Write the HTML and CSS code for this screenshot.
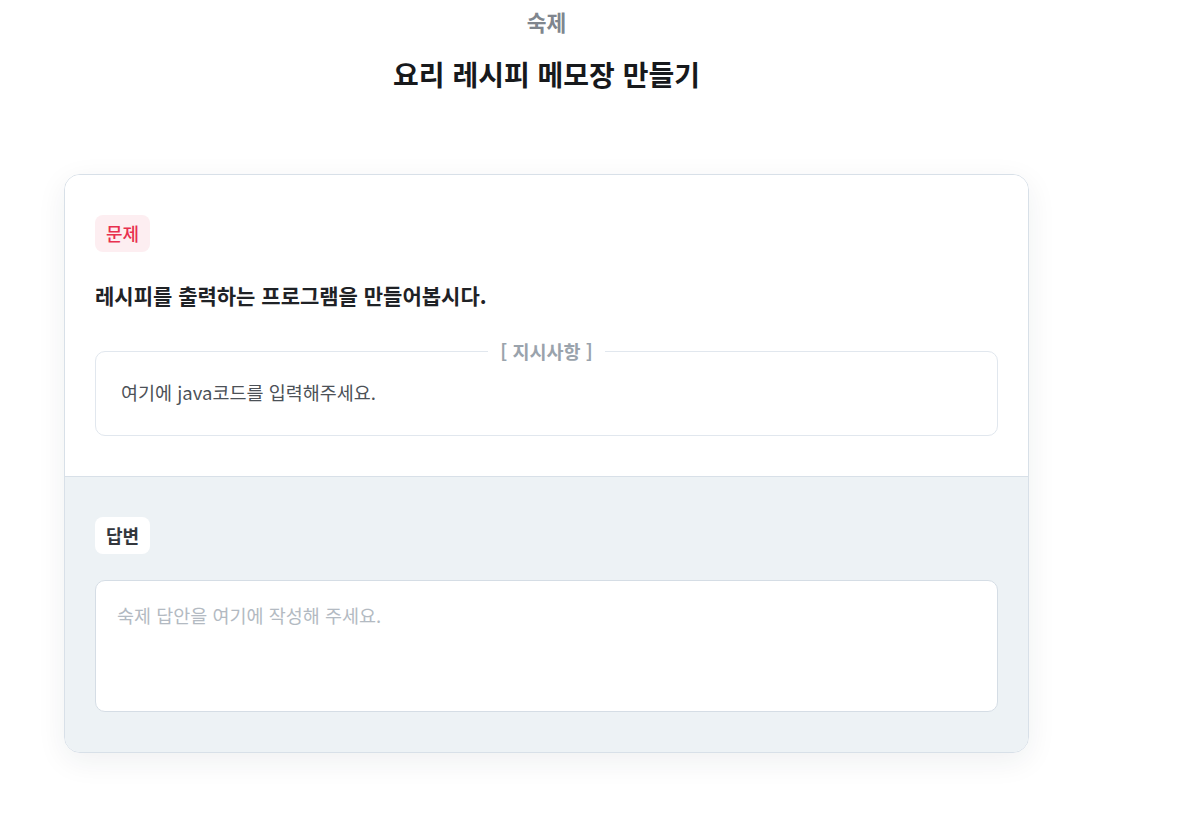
FILE: index.html
```html
<!DOCTYPE html>
<html lang="ko">
<head>
<meta charset="utf-8">
<title>요리 레시피 메모장 만들기</title>
<link rel="stylesheet" href="styles.css">
</head>
<body>
<div class="page">
  <header class="head">
    <div class="kicker">숙제</div>
    <h1 class="title">요리 레시피 메모장 만들기</h1>
  </header>
  <section class="card">
    <div class="problem">
      <span class="badge badge-red">문제</span>
      <p class="question">레시피를 출력하는 프로그램을 만들어봅시다.</p>
      <fieldset class="guide">
        <legend class="guide-title">[ 지시사항 ]</legend>
        <p class="guide-text">여기에 java코드를 입력해주세요.</p>
      </fieldset>
    </div>
    <div class="answer">
      <span class="badge badge-white">답변</span>
      <textarea class="answer-box" placeholder="숙제 답안을 여기에 작성해 주세요."></textarea>
    </div>
  </section>
</div>
</body>
</html>
```
FILE: styles.css
```css
* { box-sizing: border-box; }
html, body { margin: 0; padding: 0; background: #fff; }
body {
  font-family: "Noto Sans CJK KR", "Noto Sans", sans-serif;
  color: #1b1d21;
}
.page {
  width: 965px;
  margin-left: 64px;
  padding-bottom: 60px;
}
.head {
  text-align: center;
  padding-top: 7px;
}
.kicker {
  font-size: 21.5px;
  font-weight: 700;
  color: #80868e;
  line-height: 30px;
}
.title {
  margin: 19px 0 0;
  font-size: 28px;
  font-weight: 700;
  line-height: 36px;
  color: #17191c;
}
.card {
  margin-top: 82px;
  border: 1px solid #d8e0e8;
  border-radius: 16px;
  overflow: hidden;
  box-shadow: 0 8px 30px rgba(30, 40, 60, 0.07);
}
.problem {
  background: #fff;
  padding: 40px 30px 40px;
  border-bottom: 1px solid #d8e0e8;
}
.badge {
  display: inline-block;
  font-size: 18px;
  font-weight: 500;
  line-height: 25px;
  padding: 6px 11px;
  border-radius: 8px;
}
.badge-red { background: #fdeef1; color: #e8304f; }
.badge-white { background: #fff; color: #33373d; font-weight: 700; }
.question {
  margin: 29px 0 0;
  font-size: 21px;
  font-weight: 700;
  line-height: 28px;
  color: #1f2226;
}
.guide {
  margin: 31px 0 0;
  border: 1px solid #e1e7ee;
  border-radius: 10px;
  padding: 17px 25px 30px;
  min-width: 0;
}
.guide-title {
  margin: 0 auto;
  padding: 0 12px;
  font-size: 18.5px;
  font-weight: 700;
  color: #9aa3ac;
  line-height: 22px;
}
.guide-text {
  margin: 0;
  font-size: 18.5px;
  font-weight: 400;
  line-height: 26px;
  color: #4c5157;
}
.answer {
  background: #edf2f5;
  padding: 40px 30px 40px;
}
.answer-box {
  display: block;
  width: 100%;
  height: 132px;
  margin-top: 26px;
  border: 1px solid #d5dde5;
  border-radius: 10px;
  background: #fff;
  padding: 20px 21px;
  font-family: "Noto Sans CJK KR", "Noto Sans", sans-serif;
  font-size: 18.5px;
  line-height: 28px;
  resize: none;
  outline: none;
}
.answer-box::placeholder { color: #b3bac2; }
```
